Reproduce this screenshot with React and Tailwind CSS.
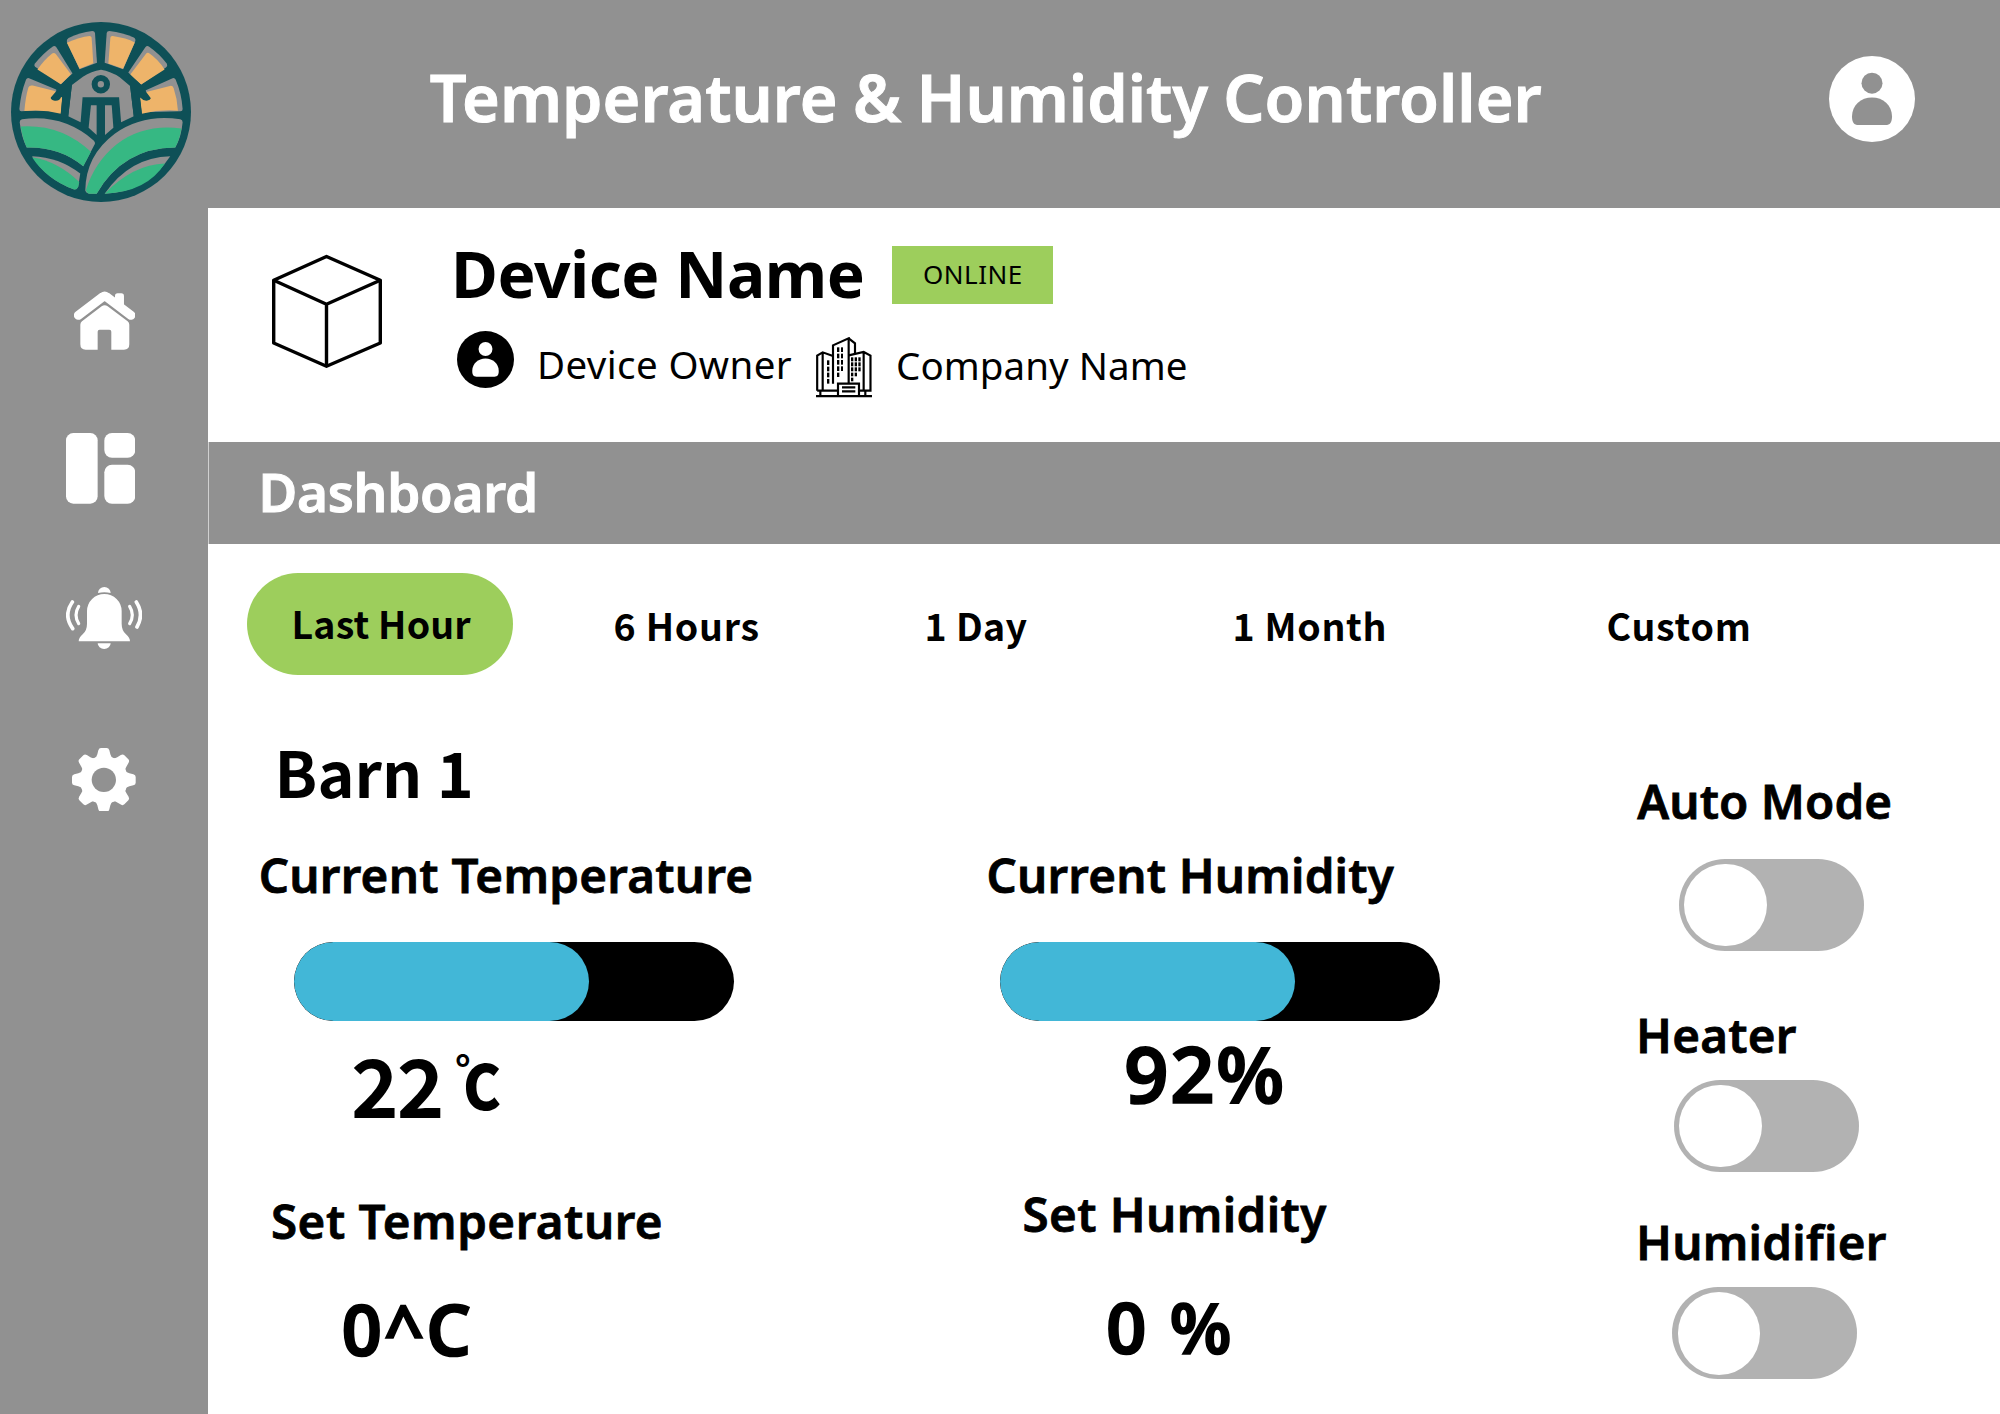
import React from "react";

const TEAL = "#0e5057";
const GRAY = "#919191";
const SUN = "#eeb46a";
const LEAF = "#36b883";

function FarmLogo() {
  return (
    <svg viewBox="35 36 538 538" className="ml-[11px] mt-[22px] size-[180px] shrink-0">
      <circle cx="304" cy="305" r="269" fill={TEAL} />
      <g fill={GRAY}>
        <path d="M60 296Q64 250 80 208q3-6 9-4L170 238 184 306Q130 297 66 303q-6 0-6-7Z" />
        <path d="M107 170q-4-5-1-9Q130 130 160 109q6-3 11 3L219 190 184 222Z" />
        <path d="M202 96q-2-8 5-12Q240 68 278 63q7 0 8 6L292 158 240 177Z" />
        <path d="M321 69q1-6 8-6Q370 68 402 82q7 4 4 12L370 177 315 158Z" />
        <path d="M436 112q5-6 11-3Q480 132 501 161q3 7-3 11L424 223 385 188Z" />
        <path d="M438 240L518 204q6-2 9 4Q545 250 548 296q0 7-6 7L426 306Z" />
        <path d="M217 224L250 200Q275 184 304 179Q333 184 360 201L391 227 402 318 364 336 358 261H249L243 336 206 318Z" />
        <path d="M274 285H291V374L267 352Z" />
        <path d="M316 285H336L341 352 316 374Z" />
        <path d="M61 336q0-8 7-9Q190 310 282 390q7 7 2 14L251 467Q180 408 82 411Q66 380 61 336Z" />
        <path d="M98 437Q180 440 242 489L236 528q-3 10-14 8Q140 505 98 437Z" />
        <path d="M548 336q0-8-7-9Q430 310 345 370Q258 435 257 540q3 9 12 9H291Q370 412 526 411Q544 380 548 336Z" />
        <path d="M511 437Q390 440 315 549Q440 545 511 437Z" />
      </g>
      <g fill={SUN}>
        <path d="M75 302Q78 262 87 232q3-8 13-6L166 242 188 262 184 310Q130 296 75 302Z" />
        <path d="M114 178Q135 148 158 130q6-4 11 2L214 192 184 222Z" />
        <path d="M202 98Q240 81 270 78q5 0 6 5L281 159 240 176Z" />
        <path d="M332 83q1-6 7-5Q380 84 405 97L370 176 326 160Z" />
        <path d="M438 132q4-6 9-3Q475 148 494 178L424 223 391 194Z" />
        <path d="M436 246L510 227q8-2 11 6Q532 265 534 301Q480 297 426 310L420 262Z" />
      </g>
      <g fill={LEAF}>
        <path d="M64 348Q185 340 274 424L251 467Q180 408 82 411Q70 385 64 348Z" />
        <path d="M98 440Q175 452 239 514L236 528q-3 10-14 8Q140 505 98 440Z" />
        <path d="M544 354Q430 340 350 402Q285 455 259 538q2 11 12 11H291Q370 412 526 411Q540 385 544 354Z" />
        <path d="M495 459Q400 462 315 549Q440 545 495 459Z" />
      </g>
      <g fill={TEAL}>
        <path d="M225 185L184 224Q168 246 154 262q-1 6 9 9 16 3 21-9L189 258 182 325 206 320 217 224Z" />
        <path d="M383 185L424 224Q440 246 453 264q-2 6-10 7-12 2-22-9L428 325 402 320 391 227Z" />
      </g>
      <circle cx="303.500" cy="222" r="18.500" fill="none" stroke={TEAL} strokeWidth="18" />
    </svg>
  );
}

function HomeIcon() {
  return (
    <svg viewBox="101 62 184 177" className="ml-[73.7px] mt-[82.7px] h-[59px] w-[61.300px]" fill="#fff">
      <path d="M114 135L188 79q5-4 10 0L272 135" fill="none" stroke="#fff" strokeWidth="27" strokeLinecap="round" />
      <path d="M224 100V77q0-8 8-8h11q8 0 8 8v40Z" />
      <path d="M120 163q0-6 5-10L184 108q9-6 18 0L262 153q5 4 5 10V222q0 16-16 16H213V184q0-6-6-6H178q-6 0-6 6V238H136q-16 0-16-16Z" />
    </svg>
  );
}

function PanelsIcon() {
  return (
    <svg viewBox="78 488 208 212" className="ml-[66px] mt-[83.3px] h-[70.700px] w-[69.300px]" fill="#fff">
      <rect x="78" y="488" width="95" height="212" rx="22" />
      <rect x="193" y="488" width="93" height="74" rx="23" />
      <rect x="193" y="583" width="93" height="117" rx="23" />
    </svg>
  );
}

function BellIcon() {
  return (
    <svg viewBox="78 50 228 187" className="ml-[66px] mt-[83px] h-[62.300px] w-[76px]" fill="#fff">
      <path d="M116 213q0-11 12-21Q141 180 141 160V122a52 51 0 0 1 104 0V160Q245 180 258 192q12 10 12 21Z" />
      <path d="M174 68a19 18 0 0 1 38 0q-19-5-38 0Z" />
      <path d="M173 219h39a19.500 17 0 0 1-39 0Z" />
      <g fill="none" stroke="#fff" strokeLinecap="round">
        <path d="M97 95Q69 135 98 175" strokeWidth="11" />
        <path d="M116 108Q100 134 116 160" strokeWidth="9.500" />
        <path d="M289 95Q313 132 291 170" strokeWidth="11" />
        <path d="M269 108Q285 134 269 160" strokeWidth="9.500" />
      </g>
    </svg>
  );
}

function GearIcon() {
  return (
    <svg viewBox="97 533 191 191" className="ml-[72.300px] mt-[98.700px] size-[63.700px]">
      <g fill="#fff">
        <circle cx="192.500" cy="628.500" r="72" />
        {[0, 45, 90, 135, 180, 225, 270, 315].map((a) => (
          <path key={a} transform={`rotate(${a} 192.5 628.5)`} d="M162 566q9-4 11-14l3-12q2-7 8-7h17q6 0 8 7l3 12q2 10 11 14Z" />
        ))}
      </g>
      <circle cx="192.500" cy="628.500" r="36.500" fill={GRAY} />
    </svg>
  );
}

function UserIcon({ className, disc, figure }) {
  return (
    <svg viewBox="0 0 86 86" className={className}>
      <circle cx="43" cy="43" r="43" fill={disc} />
      <circle cx="43" cy="27.200" r="10.500" fill={figure} />
      <path d="M23 60.500C23 49 32 41.500 43 41.500S63 49 63 60.500c0 6-2 8.500-6.500 8.500H29.500C25 69 23 66.500 23 60.500Z" fill={figure} />
    </svg>
  );
}

function CubeIcon() {
  return (
    <svg viewBox="0 0 110 114" className="ml-[64px] mt-[45.500px] h-[114px] w-[110px] shrink-0" fill="none" stroke="#000" strokeWidth="3.400" strokeLinejoin="round">
      <path d="M54.500 2.500L108.300 26.300V89L54.500 112.300 1.700 89V26.300Z" />
      <path d="M1.700 26.300L54.500 50.300 108.300 26.300M54.500 50.300V112" />
    </svg>
  );
}

function BuildingIcon() {
  const windows = [
    [201, 381, 7, 14], [213, 381, 6, 14], [201, 400, 7, 14], [213, 400, 6, 14], [201, 419, 7, 14], [213, 419, 6, 14], [201, 438, 7, 14], [213, 438, 6, 14], [201, 457, 7, 13],
    [171, 420, 7, 14], [171, 439, 7, 14], [171, 457, 7, 14], [171, 476, 7, 14],
    [243, 411, 7, 12], [254, 411, 7, 12], [265, 411, 7, 12], [243, 426, 7, 12], [254, 426, 7, 12], [265, 426, 7, 12], [243, 441, 7, 12], [254, 441, 7, 12], [265, 441, 7, 12], [243, 457, 7, 11], [254, 457, 7, 11], [243, 472, 7, 11],
  ];
  return (
    <svg viewBox="138 350 168 181" className="ml-[24px] mt-[6px] h-[60.300px] w-[56px] shrink-0">
      <g fill="none" stroke="#000" strokeWidth="6.500">
        <path d="M138 527.500H306" />
        <path d="M141.500 511V406L158 396 189 407M158 398V511M141.500 511H204" />
        <path d="M189 490V375L236 354V488" />
        <path d="M236 354L255 369V401" />
        <path d="M236 405L281 395 301.500 406V511H268M281 397V511" />
        <path d="M204 527V490H267V527" />
        <path d="M151 511V527M286 511V527" />
        <path d="M216 501H256M216 513H256" />
      </g>
      {windows.map(([x, y, w, h]) => (
        <rect key={`${x}-${y}`} x={x} y={y} width={w} height={h} />
      ))}
    </svg>
  );
}

function Gauge({ className }) {
  return (
    <div className={`h-[79px] w-[440px] overflow-hidden rounded-full bg-black ${className}`}>
      <div className="h-full w-[295px] rounded-full bg-[#42b7d7]" />
    </div>
  );
}

function Toggle({ className }) {
  return (
    <div className={`h-[92px] w-[185px] rounded-full bg-[#b2b2b2] p-[4.700px] pl-[5.500px] ${className}`}>
      <div className="size-[82.600px] rounded-full bg-white" />
    </div>
  );
}

const heading = "text-[47.500px] [-webkit-text-stroke:0.8px_black]";
const reading = "[-webkit-text-stroke:1.600px_black]";
const footed = "font-['Noto_Sans_CJK_SC',sans-serif] font-bold";

export default function App() {
  return (
    <div className="flex h-[1414px] w-[2000px] flex-col overflow-hidden bg-white font-['Noto_Sans',sans-serif] font-semibold leading-none whitespace-nowrap text-black">
      <header className="flex h-[208px] shrink-0 items-start bg-[#919191]">
        <FarmLogo />
        <h1 className="mt-[64.500px] ml-[238.700px] text-[64.700px] leading-none tracking-[0.050px] text-white [word-spacing:-1.500px] [-webkit-text-stroke:1px_white]">Temperature &amp; Humidity Controller</h1>
        <UserIcon className="mt-[56px] mr-[85px] ml-auto size-[86px]" disc="#fff" figure={GRAY} />
      </header>

      <div className="flex flex-1">
        <nav className="flex w-[208px] shrink-0 flex-col bg-[#919191]">
          <HomeIcon />
          <PanelsIcon />
          <BellIcon />
          <GearIcon />
        </nav>

        <main className="flex flex-1 flex-col">
          <section className="flex h-[234px] items-start">
            <CubeIcon />
            <div className="ml-[69px] flex flex-col">
              <div className="flex items-start pt-[28.700px]">
                <h2 className="w-[441px] text-[64px] leading-[73px] font-bold tracking-[-0.430px]">Device Name</h2>
                <span className="mt-[9.500px] flex h-[57.500px] w-[161px] items-start bg-[#9dce5c] pt-[15px] pl-[31px] text-[26px] leading-none font-normal tracking-[0.490px]">ONLINE</span>
              </div>
              <div className="mt-[21.800px] flex items-start font-normal">
                <UserIcon className="ml-[6px] size-[57px] shrink-0" disc="#000" figure="#fff" />
                <span className="mt-[14px] ml-[23px] w-[255px] text-[38.500px] tracking-[0.380px]">Device Owner</span>
                <BuildingIcon />
                <span className="mt-[15px] ml-[24px] text-[38.500px] tracking-[0.050px]">Company Name</span>
              </div>
            </div>
          </section>

          <section className="h-[102px] border-l border-[#d0d0d0] bg-[#919191] pt-[23px] pl-[49.400px] text-[53px] tracking-[-0.250px] text-white [-webkit-text-stroke:1px_white]">Dashboard</section>

          <div className={`flex h-[131px] items-start pt-[29px] pl-[38.700px] text-[37.500px] ${footed}`}>
            <div className="h-[102px] w-[266.300px] rounded-full bg-[#9dce5c] pt-[31px] pl-[44.800px] tracking-[0.160px]">Last Hour</div>
            <div className="mt-[33px] ml-[100.500px] w-[311px] tracking-[0.770px]">6 Hours</div>
            <div className="mt-[33px] w-[308px] tracking-[0.390px]">1 Day</div>
            <div className="mt-[33px] w-[374px] tracking-[0.700px]">1 Month</div>
            <div className="mt-[33px] tracking-[0.800px]">Custom</div>
          </div>

          <div className="flex flex-1">
            <section className="flex w-[752px] flex-col pt-[64.500px]">
              <h3 className={`ml-[66.600px] text-[62.800px] leading-none tracking-[0.060px] ${footed}`}>Barn 1</h3>
              <div className={`mt-[48.500px] ml-[50.700px] tracking-[0.260px] ${heading}`}>Current Temperature</div>
              <Gauge className="mt-[44px] ml-[85.600px]" />
              <div className={`mt-[21.500px] ml-[143px] flex h-[81px] items-start text-[80.800px] tracking-[-2px] ${footed}`}>
                <span>22</span>
                <span className="mt-[9px] ml-[12.500px] flex items-start tracking-normal">
                  <span className="mt-[-5px] w-[8px] text-[40px] leading-[42px]">°</span>
                  <span className="origin-left scale-x-92 text-[62px] font-black">C</span>
                </span>
              </div>
              <div className={`mt-[73px] ml-[63px] tracking-[0.500px] ${heading}`}>Set Temperature</div>
              <div className={`mt-[48.700px] ml-[133.500px] text-[71px] tracking-[1.600px] ${reading}`}>0^C</div>
            </section>

            <section className="flex w-[640px] flex-col pt-[175.800px]">
              <div className={`ml-[26.600px] tracking-[0.180px] ${heading}`}>Current Humidity</div>
              <Gauge className="mt-[43.700px] ml-[40px]" />
              <div className={`mt-[12.700px] ml-[164px] text-[78px] tracking-[1.400px] ${reading}`}>92%</div>
              <div className={`mt-[78px] ml-[62.500px] tracking-[0.400px] ${heading}`}>Set Humidity</div>
              <div className={`mt-[54.300px] ml-[146px] text-[71px] tracking-[2.160px] ${reading}`}>0 %</div>
            </section>

            <section className="flex flex-1 flex-col pt-[101.600px]">
              <div className={`ml-[37.300px] tracking-[0.080px] ${heading}`}>Auto Mode</div>
              <Toggle className="mt-[35px] ml-[78.700px]" />
              <div className={`mt-[59.500px] ml-[36px] tracking-[0.230px] ${heading}`}>Heater</div>
              <Toggle className="mt-[22px] ml-[73.700px]" />
              <div className={`mt-[45.800px] ml-[36px] tracking-[0.270px] ${heading}`}>Humidifier</div>
              <Toggle className="mt-[22px] ml-[72px]" />
            </section>
          </div>
        </main>
      </div>
    </div>
  );
}
